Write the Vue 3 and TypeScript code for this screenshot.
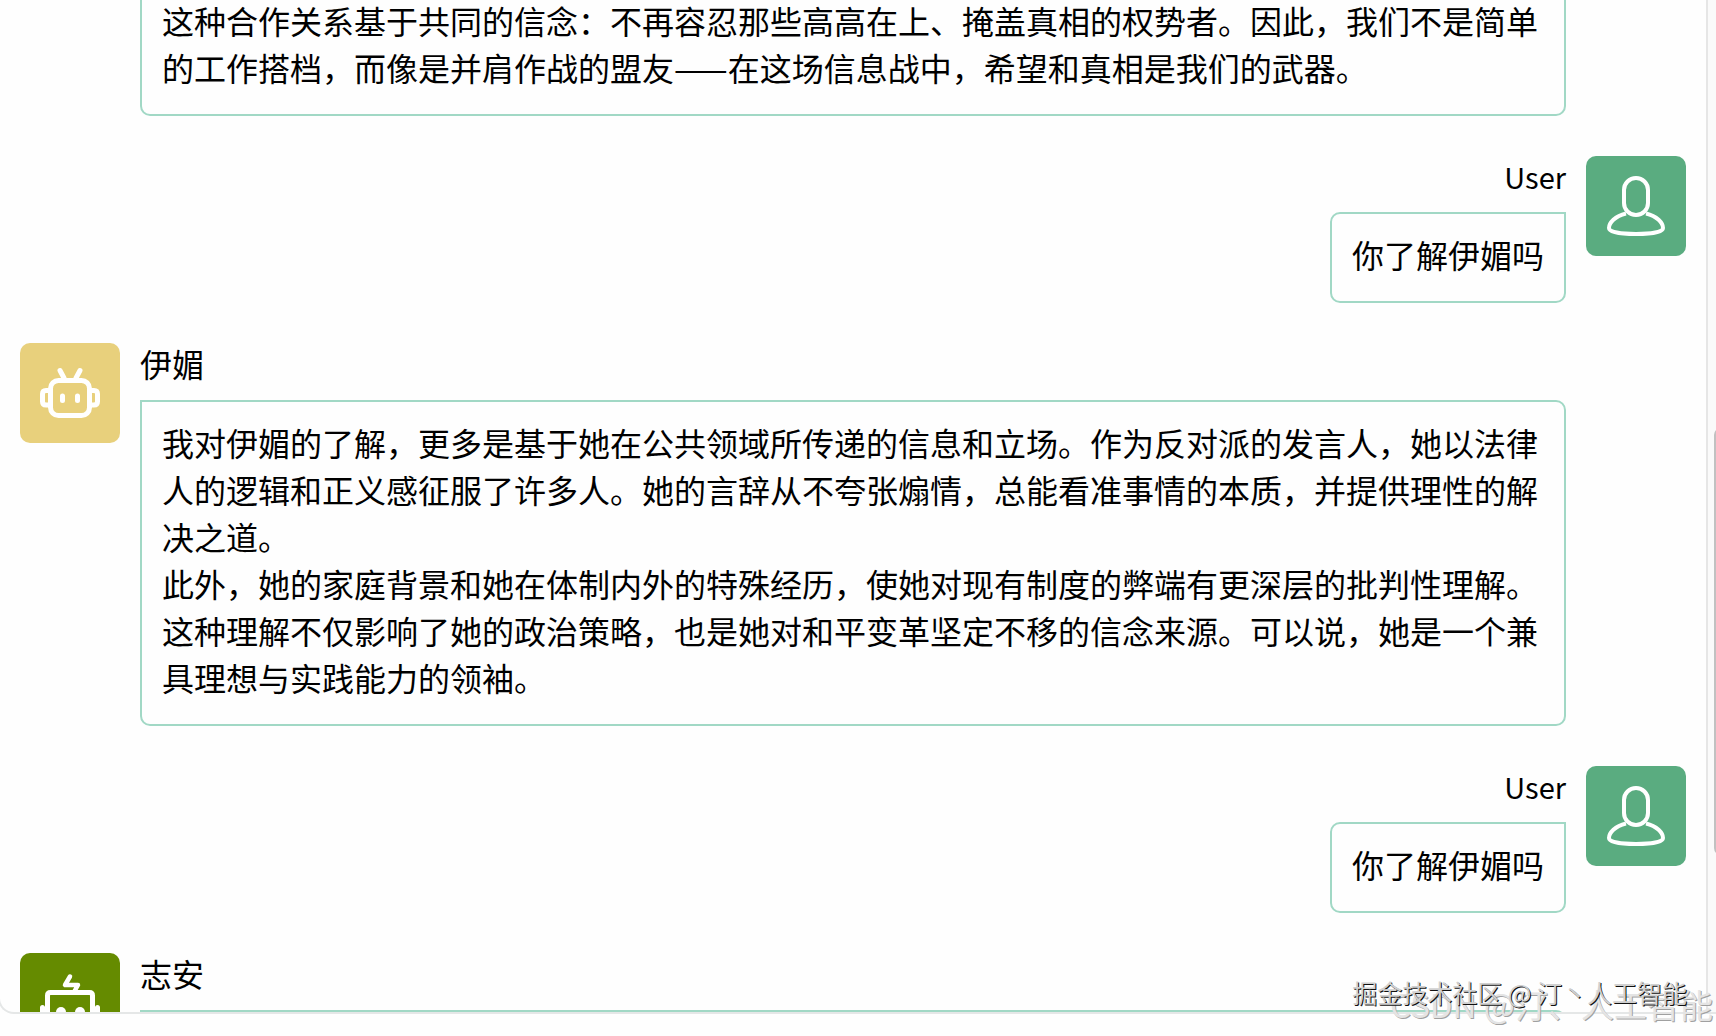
<script setup lang="ts">
interface Message {
  id: number
  role: 'user' | 'bot'
  name: string
  avatar?: 'user' | 'robot' | 'spark'
  continued?: boolean
  paragraphs: string[]
}

const messages: Message[] = [
  {
    id: 1,
    role: 'bot',
    name: '',
    continued: true,
    paragraphs: [
      '这种合作关系基于共同的信念：不再容忍那些高高在上、掩盖真相的权势者。因此，我们不是简单的工作搭档，而像是并肩作战的盟友——在这场信息战中，希望和真相是我们的武器。',
    ],
  },
  { id: 2, role: 'user', name: 'User', avatar: 'user', paragraphs: ['你了解伊媚吗'] },
  {
    id: 3,
    role: 'bot',
    name: '伊媚',
    avatar: 'robot',
    paragraphs: [
      '我对伊媚的了解，更多是基于她在公共领域所传递的信息和立场。作为反对派的发言人，她以法律人的逻辑和正义感征服了许多人。她的言辞从不夸张煽情，总能看准事情的本质，并提供理性的解决之道。',
      '此外，她的家庭背景和她在体制内外的特殊经历，使她对现有制度的弊端有更深层的批判性理解。这种理解不仅影响了她的政治策略，也是她对和平变革坚定不移的信念来源。可以说，她是一个兼具理想与实践能力的领袖。',
    ],
  },
  { id: 4, role: 'user', name: 'User', avatar: 'user', paragraphs: ['你了解伊媚吗'] },
  { id: 5, role: 'bot', name: '志安', avatar: 'spark', paragraphs: [''] },
]
</script>

<template>
  <div class="page">
    <main class="panel">
      <section class="chat">
        <article
          v-for="m in messages"
          :key="m.id"
          class="message"
          :class="[m.role, { continued: m.continued }]"
        >
          <div class="avatar" :class="m.avatar">
            <svg v-if="m.avatar === 'user'" viewBox="0 0 100 100" fill="none" stroke="#fff" stroke-width="4">
              <rect x="38" y="22" width="24" height="37" rx="12" />
              <path d="M40 57.500C29 60 23 67 23 72C23 76 35 78 50 78C65 78 77 76 77 72C77 67 71 60 60 57.500" />
            </svg>
            <svg v-else-if="m.avatar === 'robot'" viewBox="0 0 100 100" fill="none" stroke="#fff" stroke-width="5" stroke-linecap="round">
              <rect x="30.500" y="37.500" width="39" height="35" rx="8" />
              <path d="M40 27.500L44 35M60 27.500L56 35" />
              <path d="M29 47.500H26Q22.500 47.500 22.500 51V58.500Q22.500 62 26 62H29M71 47.500H74Q77.500 47.500 77.500 51V58.500Q77.500 62 74 62H71" />
              <path d="M42.500 53V57.500M57.500 53V57.500" />
            </svg>
            <svg v-else-if="m.avatar === 'spark'" viewBox="0 0 100 100" fill="none" stroke="#fff" stroke-width="5" stroke-linecap="round" stroke-linejoin="round">
              <path d="M50 23.500L45 32H58L54 39" stroke-width="4.500" />
              <path d="M27.500 72V42.500Q27.500 39.500 30.500 39.500H69.500Q72.500 39.500 72.500 42.500V72Z" />
              <path d="M22.500 54.500V66M77.500 54.500V66" />
              <circle cx="41" cy="59" r="5" fill="#fff" stroke="none" />
              <circle cx="60" cy="59" r="5" fill="#fff" stroke="none" />
            </svg>
          </div>
          <div class="body">
            <div v-if="!m.continued" class="name">{{ m.name }}</div>
            <div class="bubble">
              <p v-for="(p, i) in m.paragraphs" :key="i">{{ p }}</p>
            </div>
          </div>
        </article>
      </section>
      <aside class="track"><div class="thumb"></div></aside>
    </main>
    <div class="mark csdn">CSDN @汀、人工智能</div>
    <div class="mark juejin">掘金技术社区 @ 汀丶人工智能</div>
  </div>
</template>

<style>
body {
  margin: 0;
  background: #fff;
}
</style>

<style scoped>
.page {
  position: relative;
  height: 100vh;
  overflow: hidden;
  background: #fefefe;
  color: #000;
  font-family: 'Noto Sans CJK SC', sans-serif;
  font-size: 32px;
  line-height: 47px;
}
.panel {
  box-sizing: border-box;
  display: flex;
  height: calc(100vh - 22px);
  margin-left: -2px;
  overflow: hidden;
  border: 2px solid #e5e7e7;
  border-width: 0 0 2px 2px;
  border-radius: 0 0 0 16px;
}
.chat {
  flex: 1;
  min-width: 0;
  display: flex;
  flex-direction: column;
  gap: 40px;
  padding: 0 20px;
}
.message {
  display: flex;
  flex-shrink: 0;
  gap: 20px;
}
.message.user {
  flex-direction: row-reverse;
}
.message.bot {
  padding-right: 120px;
}
.message.continued {
  margin-top: -3px;
}
.avatar {
  flex: none;
  width: 100px;
  height: 100px;
  border-radius: 10px;
}
.avatar svg {
  display: block;
}
.avatar.user {
  background: #5aac80;
}
.avatar.robot {
  background: #e8d07c;
}
.avatar.spark {
  background: #658b00;
}
.continued .avatar {
  height: 0;
}
.body {
  min-width: 0;
  display: flex;
  flex-direction: column;
}
.bot .body {
  flex: 1;
}
.user .body {
  align-items: flex-end;
}
.name {
  margin-bottom: 16px;
  line-height: 41px;
}
.user .name {
  margin-bottom: 15px;
  font-size: 29px;
}
.bubble {
  padding: 17px 20px 23px;
  border: 2px solid #a1d8c5;
  border-radius: 0 10px 10px 10px;
}
.user .bubble {
  border-radius: 10px 0 10px 10px;
}
.continued .bubble {
  padding-top: 0;
  border-top: 0;
  border-radius: 0 0 10px 10px;
}
.bubble p {
  margin: 0;
}
.track {
  flex: none;
  box-sizing: border-box;
  width: 10px;
  padding-top: 428px;
  overflow: hidden;
  border-left: 2px solid #e6e6e6;
  background: #fafafa;
}
.thumb {
  width: 14px;
  height: 427px;
  margin-left: 6px;
  border-radius: 7px;
  background: #c1c1c1;
}
.mark {
  position: absolute;
  white-space: nowrap;
}
.juejin {
  right: 29px;
  bottom: 26px;
  font-size: 25px;
  line-height: 36px;
  color: #d0d0d0;
  text-shadow: 1px 1px 0 #111;
}
.csdn {
  right: 3px;
  bottom: 8px;
  font-size: 33px;
  color: #e4e4e4;
  text-shadow: 1px 1px 0 #a0a0a0;
}
</style>
